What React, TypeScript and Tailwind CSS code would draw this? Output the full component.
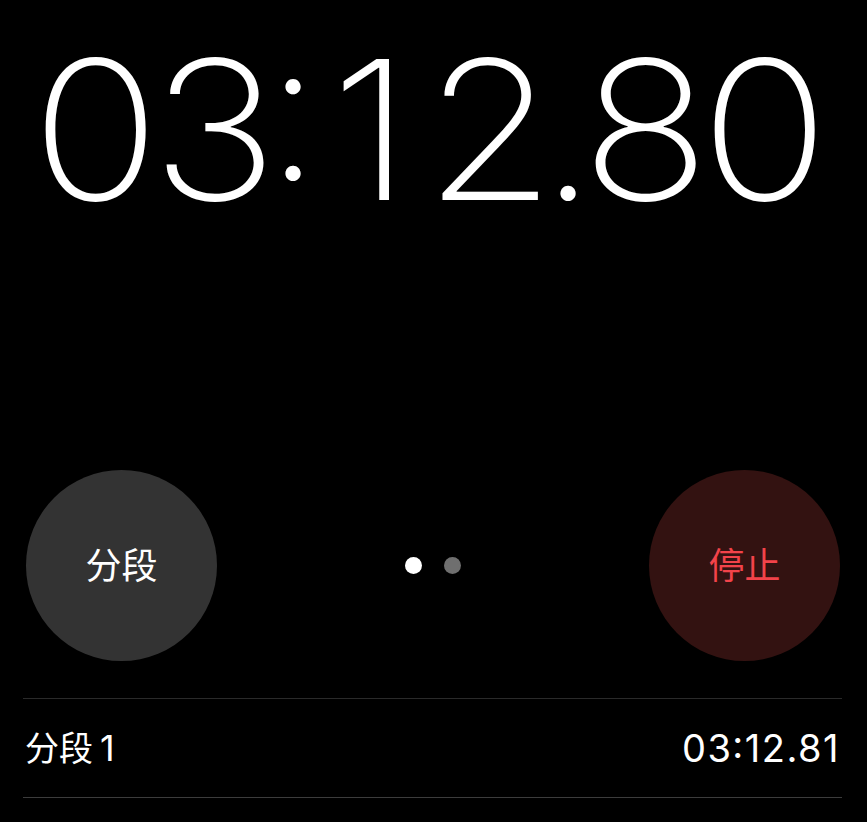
const BIG_TIME = "03:12.80";

function BigChar({ ch }: { ch: string }) {
	if (ch === ":") {
		return (
			<span className="flex w-[37px] -translate-y-[20px] justify-center font-[230]">
				{ch}
			</span>
		);
	}
	if (ch === ".") {
		return <span className="flex w-[37px] justify-center font-[230]">{ch}</span>;
	}
	return (
		<span className="flex w-[119px] justify-center">
			<span className="inline-block scale-x-[1.1]">{ch}</span>
		</span>
	);
}

export default function App() {
	return (
		<div className="h-[822px] w-[867px] overflow-hidden bg-black font-['Inter','Noto_Sans_CJK_SC',sans-serif] text-white">
			<div className="flex justify-center pr-[6px] pt-[30px] text-[194px] font-[150] leading-[200px]">
				{BIG_TIME.split("").map((ch, i) => (
					<BigChar key={i} ch={ch} />
				))}
			</div>

			<div className="mt-[240px] flex items-center justify-between pl-[26px] pr-[27px]">
				<button
					type="button"
					className="flex h-[191px] w-[191px] items-center justify-center rounded-full bg-[#333333] text-[36px] text-white"
				>
					分段
				</button>
				<div className="flex items-center gap-[22px]">
					<span className="h-[17px] w-[17px] rounded-full bg-white" />
					<span className="h-[17px] w-[17px] rounded-full bg-[#6f6f6f]" />
				</div>
				<button
					type="button"
					className="flex h-[191px] w-[191px] items-center justify-center rounded-full bg-[#331211] text-[36px] text-[#f2434a]"
				>
					停止
				</button>
			</div>

			<div className="ml-[23px] mr-[25px] mt-[37px] flex h-[100px] items-center justify-between border-y border-t-[#2a2a2a] border-b-[#3c3c3c] px-[2px]">
				<span className="text-[34px]">
					分段<span className="ml-[7px] text-[36px]">1</span>
				</span>
				<span className="text-[38px] tracking-[1.5px] [font-feature-settings:'calt'_1]">03:12.81</span>
			</div>
		</div>
	);
}
